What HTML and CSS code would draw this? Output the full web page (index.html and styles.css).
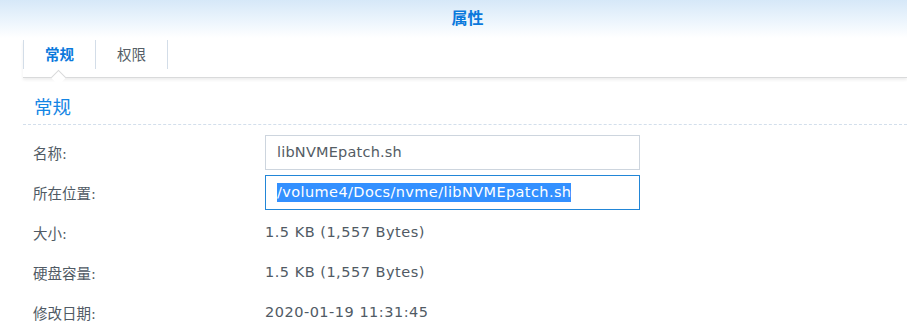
FILE: index.html
```html
<!DOCTYPE html>
<html lang="zh-CN">
<head>
<meta charset="utf-8">
<title>属性</title>
<link rel="stylesheet" href="styles.css">
</head>
<body>
<div class="header"><span class="header-title">属性</span></div>
<div class="tabbar">
  <div class="tab active">常规</div>
  <div class="tab">权限</div>
  <span class="notch"></span>
</div>
<div class="section-title">常规</div>
<div class="form">
  <div class="row">
    <div class="label">名称:</div>
    <div class="value"><div class="field">libNVMEpatch.sh</div></div>
  </div>
  <div class="row">
    <div class="label">所在位置:</div>
    <div class="value"><div class="field focused"><span class="sel">/volume4/Docs/nvme/libNVMEpatch.sh</span></div></div>
  </div>
  <div class="row">
    <div class="label">大小:</div>
    <div class="value text">1.5 KB (1,557 Bytes)</div>
  </div>
  <div class="row">
    <div class="label">硬盘容量:</div>
    <div class="value text">1.5 KB (1,557 Bytes)</div>
  </div>
  <div class="row">
    <div class="label">修改日期:</div>
    <div class="value text">2020-01-19 11:31:45</div>
  </div>
</div>
</body>
</html>
```
FILE: styles.css
```css
html, body {
  margin: 0;
  padding: 0;
  background: #ffffff;
  overflow: hidden;
}
body {
  font-family: "DejaVu Sans", "Noto Sans CJK SC", sans-serif;
  font-size: 14.5px;
  color: #505a64;
}
.header {
  height: 38px;
  background: linear-gradient(#d6e8f8, #eef6fd 60%, #ffffff);
  text-align: center;
  padding-left: 28px;
  box-sizing: border-box;
}
.header-title {
  display: inline-block;
  line-height: 37px;
  font-size: 16px;
  font-weight: bold;
  color: #0a79dc;
}
.tabbar {
  position: relative;
  margin: 2px 0 0 23px;
  padding-bottom: 8px;
  display: flex;
  border-bottom: 1px solid #d9dadb;
  box-shadow: 0 2px 3px rgba(0, 0, 0, 0.07);
}
.tab {
  height: 29px;
  line-height: 31px;
  width: 71px;
  text-align: center;
  border-left: 1px solid #d3dde8;
  color: #555e66;
  overflow: hidden;
}
.tab + .tab {
  border-right: 1px solid #d3dde8;
}
.tab.active {
  color: #0a79dc;
  font-weight: bold;
}
.notch {
  position: absolute;
  left: 30px;
  bottom: -6px;
  width: 10px;
  height: 10px;
  background: #ffffff;
  border-left: 1px solid #d9dadb;
  border-top: 1px solid #d9dadb;
  transform: rotate(45deg);
}
.section-title {
  margin: 17px 0 0 23px;
  padding: 0 0 4px 11px;
  font-size: 18.5px;
  line-height: 25px;
  color: #1485e4;
  border-bottom: 1px dashed #d3dfec;
}
.form {
  margin: 7px 0 0 33px;
}
.row {
  display: grid;
  grid-template-columns: 232px 375px;
  height: 40px;
  align-items: center;
}
.text {
  letter-spacing: 0.5px;
}
.field {
  height: 35px;
  box-sizing: border-box;
  border: 1px solid #cdd5de;
  padding: 0 11px;
  line-height: 33px;
  color: #545c64;
  white-space: nowrap;
  letter-spacing: 0.2px;
}
.field.focused {
  border-color: #2286d7;
  letter-spacing: 0.4px;
}
.sel {
  background: #3390ff;
  color: #ffffff;
  padding: 1px 0 2px;
}
```
